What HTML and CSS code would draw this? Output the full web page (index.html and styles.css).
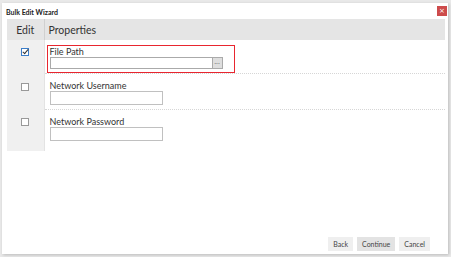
FILE: index.html
```html
<!DOCTYPE html>
<html lang="en">
<head>
  <meta charset="UTF-8">
  <title>Bulk Edit Wizard</title>
  <link rel="stylesheet" href="styles.css">
</head>
<body>
  <div class="backdrop">
    <div class="dialog">
      <div class="dialog-title">
        <span>Bulk Edit Wizard</span>
        <button class="close-btn">&times;</button>
      </div>

      <table class="props">
        <thead>
          <tr>
            <th class="col-edit">Edit</th>
            <th>Properties</th>
          </tr>
        </thead>
        <tbody>
          <tr class="row-path">
            <td class="col-edit"><span class="check checked"></span></td>
            <td>
              <div class="field highlight">
                <label>File Path</label>
                <div class="path-input">
                  <input type="text">
                  <button class="browse">...</button>
                </div>
              </div>
            </td>
          </tr>
          <tr class="row-user">
            <td class="col-edit"><span class="check"></span></td>
            <td>
              <div class="field">
                <label>Network Username</label>
                <input type="text" class="short">
              </div>
            </td>
          </tr>
          <tr class="row-pass">
            <td class="col-edit"><span class="check"></span></td>
            <td>
              <div class="field">
                <label>Network Password</label>
                <input type="password" class="short">
              </div>
            </td>
          </tr>
        </tbody>
      </table>

      <div class="actions">
        <button class="btn">Back</button>
        <button class="btn">Continue</button>
        <button class="btn">Cancel</button>
      </div>
    </div>
  </div>
</body>
</html>
```

FILE: styles.css
```css
html, body {
  margin: 0;
  padding: 0;
}

body {
  width: 451px;
  height: 257px;
  background: #e9e9e9;
  font-family: Lato, 'Open Sans', sans-serif;
  color: #333;
  overflow: hidden;
}

.backdrop {
  padding: 3px 3px 3px 2px;
}

.dialog {
  background: #fff;
  height: 251px;
  box-shadow: 1px 1px 3px rgba(0, 0, 0, 0.2);
  display: flex;
  flex-direction: column;
  padding: 0 3px 0 5px;
  box-sizing: border-box;
}

/* Title bar */
.dialog-title {
  display: flex;
  justify-content: space-between;
  align-items: flex-start;
  height: 16px;
  margin-left: -1px;
  font-size: 7px;
  font-weight: bold;
  color: #222;
}

.dialog-title span {
  padding-top: 5px;
}

.close-btn {
  width: 10px;
  height: 10px;
  margin-top: 3px;
  margin-right: -2px;
  padding: 0;
  border: none;
  background: #cd4b4b;
  color: #fff;
  font-size: 7px;
  line-height: 10px;
  font-family: 'DejaVu Sans', sans-serif;
}

/* Properties grid */
.props {
  width: 438px;
  border-collapse: collapse;
}

.props th {
  background: #e5e5e5;
  height: 21px;
  padding: 0 0 0 4px;
  text-align: left;
  font-weight: normal;
  font-size: 10.5px;
  color: #333;
}

.props th.col-edit {
  width: 37px;
  text-align: center;
  padding: 0;
  border-right: 1px solid #d0d0d0;
  box-sizing: border-box;
}

.props td {
  padding: 0;
  vertical-align: top;
}

.props td.col-edit {
  background: #f0f0f0;
  border-right: 1px solid #e3e3e3;
  text-align: center;
}

.row-path td:last-child,
.row-user td:last-child {
  border-bottom: 1px dotted #d6d6d6;
}

.row-path { height: 33px; }
.row-user { height: 36px; }
.row-pass { height: 41px; }

.check {
  display: inline-block;
  width: 6px;
  height: 6px;
  border: 1px solid #999;
  background: #fff;
  position: relative;
  margin-top: 9px;
}

.row-path .check { margin-top: 7px; }
.row-pass .check { margin-top: 8px; }

.check.checked {
  border-color: #3b7dc8;
}

.check.checked::after {
  content: "";
  position: absolute;
  left: 2px;
  top: -1px;
  width: 2px;
  height: 5px;
  border-right: 1.5px solid #333;
  border-bottom: 1.5px solid #333;
  transform: rotate(40deg);
}

.field {
  display: flex;
  flex-direction: column;
  align-items: flex-start;
  padding: 7px 0 0 5px;
}

.field label {
  font-size: 9px;
  line-height: 10px;
  color: #333;
}

.field.highlight {
  margin: 5px 0 0 2px;
  padding: 0 11px 3px 2px;
  width: 173px;
  border: 1px solid #e8262f;
  align-items: stretch;
}

.field.highlight label {
  padding-top: 1px;
}

.path-input {
  display: flex;
  height: 12px;
}

.path-input input {
  flex: 1;
  min-width: 0;
  height: 12px;
  box-sizing: border-box;
  border: 1px solid #aaa;
  border-right: none;
  padding: 0;
}

.browse {
  width: 11px;
  height: 12px;
  padding: 0 0 3px;
  border: 1px solid #aaa;
  background: #dedede;
  font-family: 'DejaVu Sans', sans-serif;
  font-size: 6px;
  line-height: 6px;
  color: #333;
}

input.short {
  width: 113px;
  height: 14px;
  box-sizing: border-box;
  border: 1px solid #c0c0c0;
  padding: 0;
}

/* Footer buttons */
.actions {
  margin-top: auto;
  display: flex;
  justify-content: flex-end;
  gap: 4px;
  padding: 0 15px 3px 0;
}

.btn {
  height: 14px;
  padding: 0 5px;
  border: none;
  background: #efefef;
  font-family: inherit;
  font-size: 7px;
  color: #444;
}

.btn:nth-child(2) {
  background: #e3e3e3;
}
```
